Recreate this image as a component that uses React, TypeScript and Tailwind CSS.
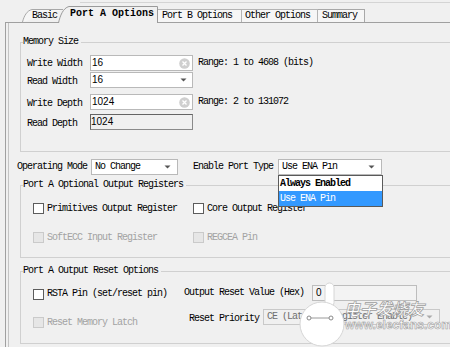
import React from "react";

function ClearIcon() {
  return (
    <svg width="11" height="11" viewBox="0 0 11 11" className="shrink-0">
      <circle cx="5.5" cy="5.5" r="5.3" fill="#cfcfcf" />
      <path d="M3.5 3.5 L7.5 7.5 M7.5 3.5 L3.5 7.5" stroke="#ffffff" strokeWidth="1.3" />
    </svg>
  );
}

function Arrow({ color = "#555" }: { color?: string }) {
  return (
    <svg width="7" height="4" viewBox="0 0 7 4" className="shrink-0">
      <path d="M0.5 0.5 H6.5 L3.5 3.5 Z" fill={color} />
    </svg>
  );
}

function TextInput({ value }: { value: string }) {
  return (
    <div className="w-[103px] h-[16px] bg-white border border-[#b9b9b9] flex items-center pl-[1px] pr-[2px] font-['Liberation_Sans',sans-serif] tracking-normal text-[10px]">
      <span className="flex-1">{value}</span>
      <ClearIcon />
    </div>
  );
}

function Select({ value, w, disabled }: { value: string; w: string; disabled?: boolean }) {
  return (
    <div
      className={`${w} h-[16px] border flex items-center pl-[3px] pr-[6px] ${
        disabled ? "bg-[#f0f0f0] border-[#c9c9c9] text-[#6f6f6f]" : "bg-white border-[#b9b9b9] text-black"
      }`}
    >
      <span className="flex-1 whitespace-nowrap overflow-hidden">{value}</span>
      <Arrow color={disabled ? "#aaa" : "#555"} />
    </div>
  );
}

function Check({ label, disabled }: { label: string; disabled?: boolean }) {
  return (
    <div className="flex items-center gap-[3px]">
      <span
        className={`w-[11px] h-[11px] border shrink-0 ${
          disabled ? "border-[#cacaca] bg-[#e6e6e6]" : "border-[#5c5c5c] bg-white"
        }`}
      />
      <span className={`whitespace-nowrap ${disabled ? "text-[#a3a3a3]" : "text-black"}`}>{label}</span>
    </div>
  );
}

export default function App() {
  return (
    <div className="relative w-[450px] h-[347px] overflow-hidden bg-[#f0f0f0] text-black text-[10px] leading-[10px] tracking-[-1px] font-['Liberation_Mono',monospace] flex flex-col">
      {/* header */}
      <div className="h-[22px] shrink-0 flex flex-col">
        <div className="ml-[80px] mt-[2px] h-[1px] bg-[#d4d4d4]" />
        <div className="flex-1 flex items-end pl-[22px]">
          <div className="relative w-[41px] h-[13px] flex items-center pl-[10px]">
            <svg width="41" height="13" viewBox="0 0 41 13" className="absolute inset-0">
              <path d="M0.5 13 C2 7 5 1.5 10 0.5 H41" fill="#f6f6f6" stroke="#a8a8a8" />
            </svg>
            <span className="relative">Basic</span>
          </div>
          <div className="relative z-10 ml-[-5px] mb-[-1px] w-[100px] h-[17px] flex items-center pl-[12px] pb-[2px]">
            <svg width="100" height="17" viewBox="0 0 100 17" className="absolute inset-0">
              <path d="M0.5 17 C2 10 5 2 11 0.5 H99.5 V17" fill="#f0f0f0" stroke="#9a9a9a" />
            </svg>
            <span className="relative font-bold tracking-normal">Port A Options</span>
          </div>
          <div className="w-[84px] h-[13px] border-t border-r border-[#b4b4b4] bg-[#f6f6f6] flex items-center pl-[4px]">
            Port B Options
          </div>
          <div className="w-[76px] h-[13px] border-t border-r border-[#b4b4b4] bg-[#f6f6f6] flex items-center pl-[3px]">
            Other Options
          </div>
          <div className="w-[47px] h-[13px] border-t border-r border-[#a8a8a8] bg-[#f6f6f6] flex items-center pl-[4px]">
            Summary
          </div>
        </div>
      </div>

      {/* pane */}
      <div className="flex-1 ml-[5px] border-l border-t border-[#a0a0a0] flex">
        <div className="flex-1 ml-[2px] border-l border-[#c4c4c4] flex flex-col">
          {/* Memory Size */}
          <fieldset className="mt-[14px] ml-[11px] w-[470px] border border-[#d0d0d0]">
            <legend className="ml-[2px] pr-[3px] leading-[10px]">Memory Size</legend>
            <div className="pt-[8px] pl-[6px] pb-[21px] flex flex-col">
              <div className="flex items-center h-[16px]">
                <span className="w-[63px] pt-[2px]">Write Width</span>
                <TextInput value="16" />
                <span className="ml-[5px] whitespace-nowrap">Range: 1 to 4608 (bits)</span>
              </div>
              <div className="flex items-center h-[16px] mt-[1px]">
                <span className="w-[63px] pt-[3px]">Read Width</span>
                <div className="w-[103px] h-[16px] bg-white border border-[#b9b9b9] flex items-center pl-[1px] pr-[5px] font-['Liberation_Sans',sans-serif] tracking-normal">
                  <span className="flex-1">16</span>
                  <Arrow />
                </div>
              </div>
              <div className="flex items-center h-[16px] mt-[6px]">
                <span className="w-[63px] pt-[3px]">Write Depth</span>
                <TextInput value="1024" />
                <span className="ml-[5px] whitespace-nowrap">Range: 2 to 131072</span>
              </div>
              <div className="flex items-center h-[16px] mt-[4px]">
                <span className="w-[63px] pt-[3px]">Read Depth</span>
                <div className="w-[103px] h-[16px] bg-[#f0f0f0] border border-[#8a8a8a] border-t-[#646464] border-l-[#646464] flex items-center font-['Liberation_Sans',sans-serif] tracking-normal">
                  <span>1024</span>
                </div>
              </div>
            </div>
          </fieldset>

          {/* Operating mode row */}
          <div className="mt-[7px] pl-[8px] flex items-center h-[16px]">
            <span className="w-[74px] whitespace-nowrap">Operating Mode</span>
            <Select value="No Change" w="w-[87px]" />
            <span className="ml-[15px] w-[85px] whitespace-nowrap">Enable Port Type</span>
            <div className="relative">
              <Select value="Use ENA Pin" w="w-[104px]" />
              <div className="absolute left-0 top-[16px] w-[105px] z-20 bg-white border border-[#5a5a5a] flex flex-col">
                <div className="h-[15px] flex items-center pl-[1px] font-bold tracking-[-1px]">Always Enabled</div>
                <div className="h-[15px] flex items-center pl-[1px] bg-[#3399ff] text-white">Use ENA Pin</div>
              </div>
            </div>
          </div>

          {/* Port A Optional Output Registers */}
          <fieldset className="mt-[5px] ml-[11px] w-[470px] border border-[#d0d0d0]">
            <legend className="ml-[2px] pr-[3px] leading-[10px]">Port A Optional Output Registers</legend>
            <div className="pt-[13px] pl-[12px] pb-[14px] flex flex-col">
              <div className="flex items-center h-[11px]">
                <div className="w-[160px]">
                  <Check label="Primitives Output Register" />
                </div>
                <Check label="Core Output Register" />
              </div>
              <div className="flex items-center h-[11px] mt-[18px]">
                <div className="w-[160px]">
                  <Check label="SoftECC Input Register" disabled />
                </div>
                <Check label="REGCEA Pin" disabled />
              </div>
            </div>
          </fieldset>

          {/* Port A Output Reset Options */}
          <fieldset className="mt-[8px] ml-[11px] w-[470px] border border-[#d0d0d0]">
            <legend className="ml-[2px] pr-[3px] leading-[10px]">Port A Output Reset Options</legend>
            <div className="pt-[9px] pl-[12px] pb-[15px] flex flex-col">
              <div className="flex items-center h-[16px]">
                <div className="w-[151px] pt-[2px]">
                  <Check label="RSTA Pin (set/reset pin)" />
                </div>
                <span className="w-[128px] whitespace-nowrap">Output Reset Value (Hex)</span>
                <div className="w-[105px] h-[16px] border border-[#bdbdbd] bg-[#f3f3f3] flex items-center pl-[3px] font-['Liberation_Sans',sans-serif] tracking-normal">
                  0
                </div>
              </div>
              <div className="flex items-start mt-[8px]">
                <div className="w-[156px] pt-[8px]">
                  <Check label="Reset Memory Latch" disabled />
                </div>
                <span className="w-[74px] pt-[5px] whitespace-nowrap">Reset Priority</span>
                <Select value="CE (Latch or Register Enable)" w="w-[177px]" disabled />
              </div>
            </div>
          </fieldset>
        </div>
      </div>

      {/* watermark overlay */}
      <svg width="60" height="70" viewBox="0 0 60 70" className="absolute left-[296px] top-[280px] pointer-events-none">
        <rect x="29" y="3" width="9" height="24" rx="4.5" fill="#ffffff" stroke="#d6d6d6" />
        <circle cx="26" cy="44" r="22" fill="#ffffff" stroke="#d6d6d6" />
        <path d="M13 38 L35 38" stroke="#9a9a9a" strokeWidth="1" />
        <circle cx="13" cy="38" r="2" fill="#ffffff" stroke="#8a8a8a" />
        <circle cx="35" cy="38" r="2" fill="#ffffff" stroke="#8a8a8a" />
      </svg>
      <div className="absolute left-[344px] top-[299px] pointer-events-none text-[16px] leading-[18px] tracking-normal italic font-bold text-white font-['Noto_Sans_CJK_SC',sans-serif] [-webkit-text-stroke:0.7px_#9c9c9c]">
        电子发烧友
      </div>
      <div className="absolute left-[345px] top-[319px] pointer-events-none text-[12px] leading-[13px] tracking-normal font-bold text-white font-['Liberation_Sans',sans-serif] [-webkit-text-stroke:0.6px_#a0a0a0]">
        www.elecfans.com
      </div>
    </div>
  );
}
